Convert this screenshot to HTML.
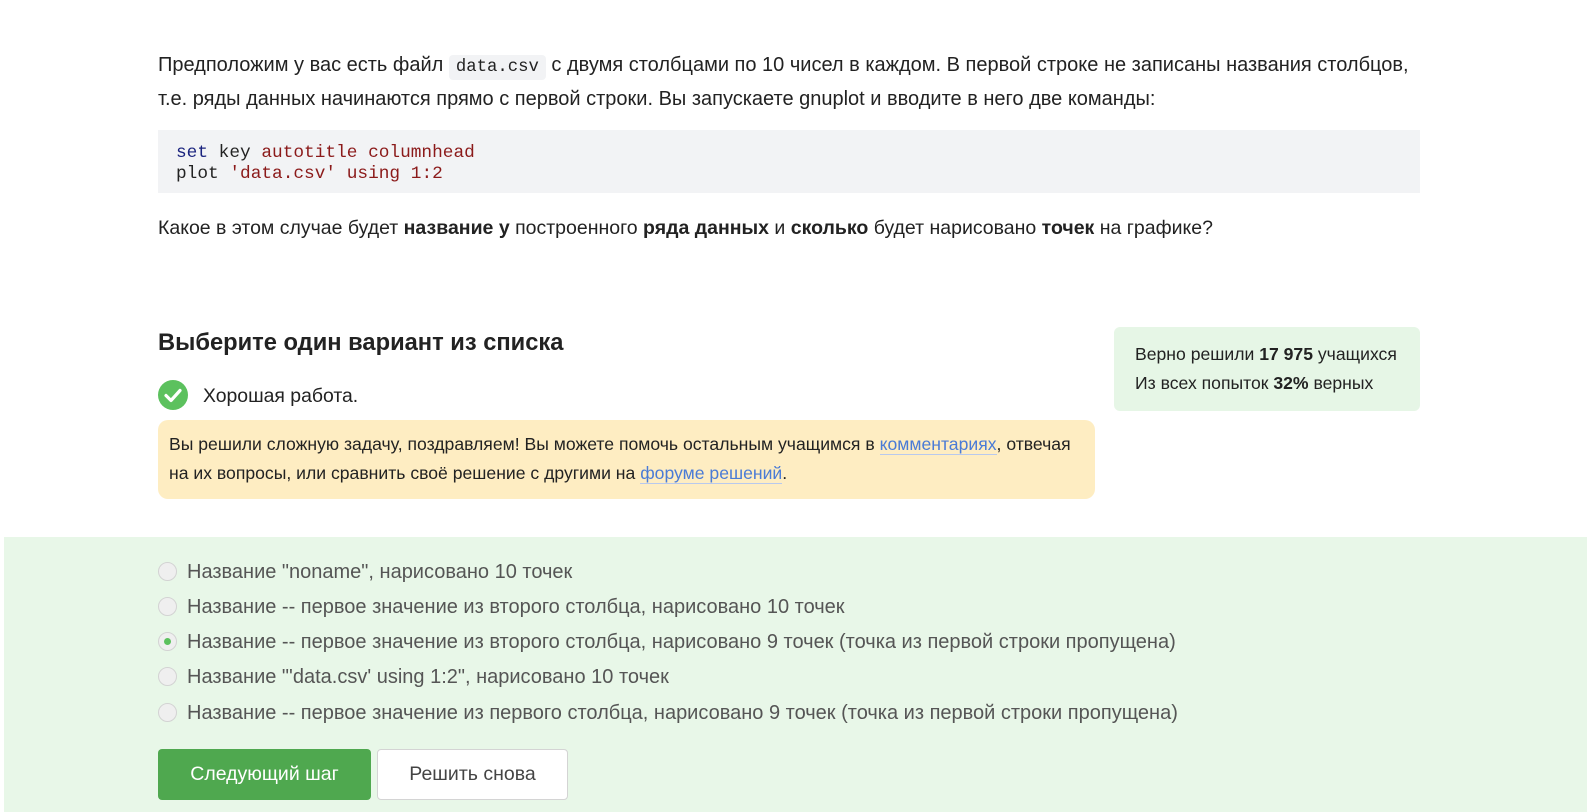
<!DOCTYPE html>
<html><head><meta charset="utf-8"><style>
*{margin:0;padding:0;box-sizing:border-box}
body{width:1587px;height:812px;overflow:hidden;background:#fff;font-family:"Liberation Sans",sans-serif;color:#222;position:relative}
.a{position:absolute;white-space:nowrap}
.p{font-size:20px;line-height:34px}
code{font-family:"Liberation Mono",monospace;font-size:17.3px;background:#f2f3f5;border-radius:4px;padding:3px 7px}
.code{position:absolute;left:158px;top:130px;width:1262px;height:63px;background:#f2f3f5;font-family:"Liberation Mono",monospace;font-size:17.8px;line-height:21px;padding:13px 18px;color:#222}
.kw{color:#1a237e}.st{color:#8b1a1a}
a{color:#4a7bd6;text-decoration:none;border-bottom:1px solid #b8c9ee}
.opt{position:absolute;left:158px;font-size:20px;color:#555;white-space:nowrap}
.r{display:inline-block;width:19px;height:19px;border-radius:50%;border:1px solid #d3d3d3;background:#efefef;vertical-align:-3px;margin-right:10px;position:relative}
.r.on::after{content:"";position:absolute;left:5px;top:5px;width:7px;height:7px;border-radius:50%;background:#5cc15e}
</style></head><body>
<div class="a p" style="left:158px;top:48px">Предположим у вас есть файл <code>data.csv</code> с двумя столбцами по 10 чисел в каждом. В первой строке не записаны названия столбцов,</div>
<div class="a p" style="left:158px;top:82px">т.е. ряды данных начинаются прямо с первой строки. Вы запускаете gnuplot и вводите в него две команды:</div>
<div class="code"><span class="kw">set</span> key <span class="st">autotitle columnhead</span><br>plot <span class="st">'data.csv'</span> <span class="st">using</span> <span class="st">1:2</span></div>
<div class="a p" style="left:158px;top:211px;font-size:19.5px">Какое в этом случае будет <b>название у</b> построенного <b>ряда данных</b> и <b>сколько</b> будет нарисовано <b>точек</b> на графике?</div>
<div class="a" style="left:158px;top:330px;font-size:23.7px;font-weight:bold;color:#222">Выберите один вариант из списка</div>
<svg class="a" style="left:158px;top:380px" width="30" height="30"><circle cx="15" cy="15" r="15" fill="#5cc15e"/><path d="M8 15.5l5 5 9-10" stroke="#fff" stroke-width="3.2" fill="none" stroke-linecap="round" stroke-linejoin="round"/></svg>
<div class="a" style="left:203px;top:385px;font-size:19.4px">Хорошая работа.</div>
<div class="a" style="left:158px;top:420px;width:937px;height:79px;background:#feedc2;border-radius:10px;padding:10px 11px;font-size:17.6px;line-height:29px;white-space:normal">Вы решили сложную задачу, поздравляем! Вы можете помочь остальным учащимся в <a>комментариях</a>, отвечая на их вопросы, или сравнить своё решение с другими на <a>форуме решений</a>.</div>
<div class="a" style="left:1114px;top:327px;width:306px;height:84px;background:#e6f6e6;border-radius:6px;padding:13px 21px;font-size:17.6px;line-height:29px">Верно решили <b>17 975</b> учащихся<br>Из всех попыток <b>32%</b> верных</div>
<div class="a" style="left:4px;top:537px;width:1583px;height:275px;background:#e8f7e8"></div>
<div class="opt" style="top:561px"><span class="r"></span>Название "noname", нарисовано 10 точек</div>
<div class="opt" style="top:596px"><span class="r"></span>Название -- первое значение из второго столбца, нарисовано 10 точек</div>
<div class="opt" style="top:631px"><span class="r on"></span>Название -- первое значение из второго столбца, нарисовано 9 точек (точка из первой строки пропущена)</div>
<div class="opt" style="top:666px"><span class="r"></span>Название "'data.csv' using 1:2", нарисовано 10 точек</div>
<div class="opt" style="top:702px"><span class="r"></span>Название -- первое значение из первого столбца, нарисовано 9 точек (точка из первой строки пропущена)</div>
<div class="a" style="left:158px;top:749px;width:213px;height:51px;background:#4fa84f;border-radius:4px;color:#fff;font-size:19.5px;line-height:51px;text-align:center">Следующий шаг</div>
<div class="a" style="left:377px;top:749px;width:191px;height:51px;background:#fff;border:1px solid #d4d4d4;border-radius:4px;color:#444;font-size:19.5px;line-height:49px;text-align:center">Решить снова</div>
</body></html>
